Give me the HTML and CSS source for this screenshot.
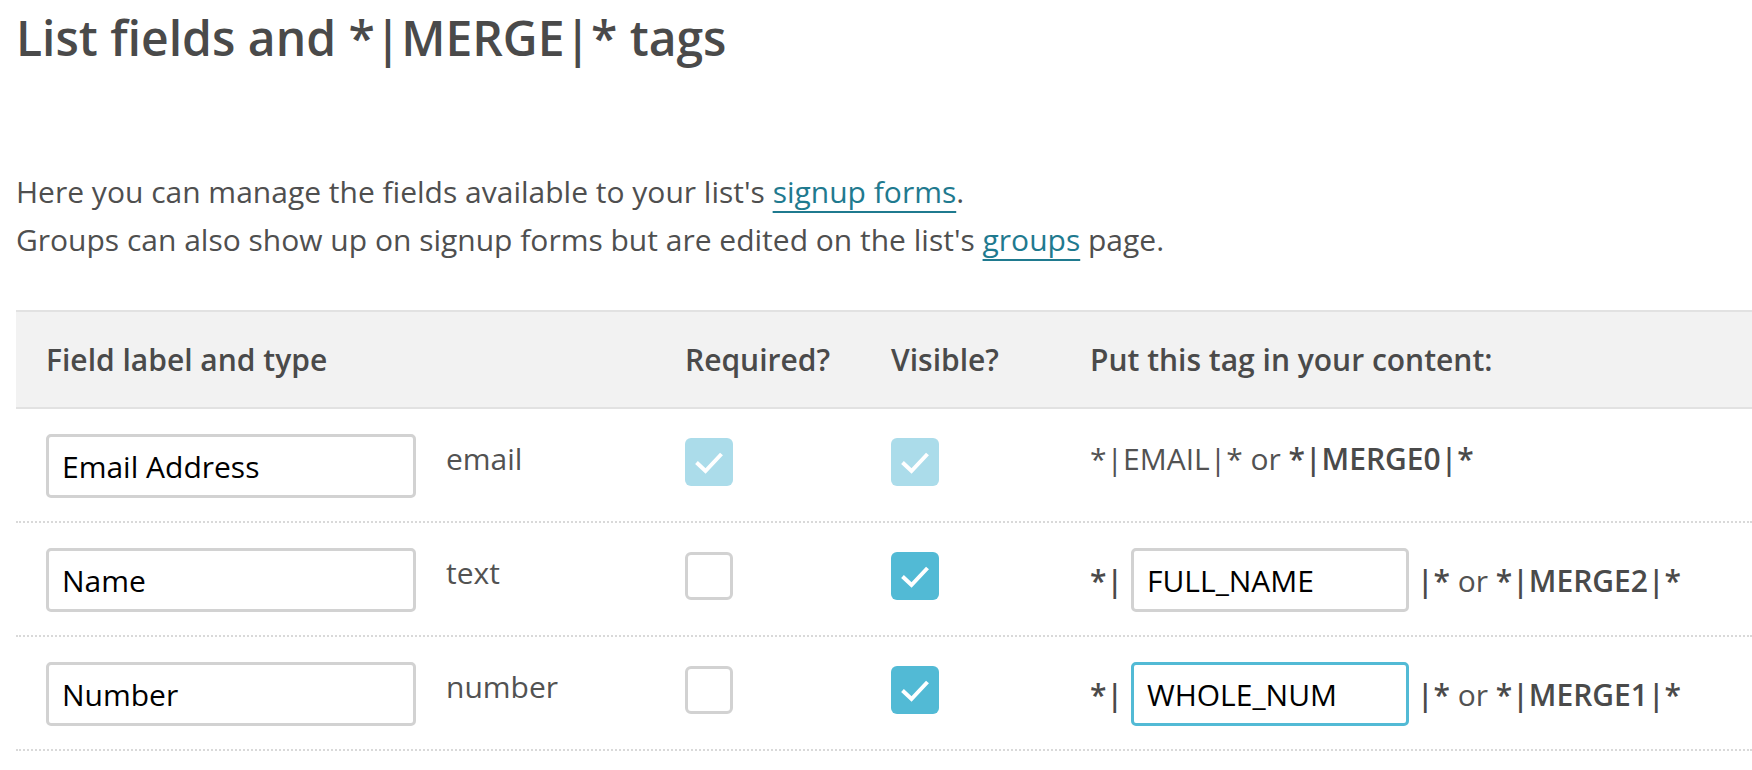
FILE: index.html
```html
<!DOCTYPE html>
<html lang="en">
<head>
<meta charset="utf-8">
<title>List fields and *|MERGE|* tags</title>
<link rel="stylesheet" href="styles.css">
</head>
<body>
<div class="page">
  <h1 class="title">List fields and *|MERGE|* tags</h1>
  <p class="intro">Here you can manage the fields available to your list's <a href="#" class="link">signup forms</a>.<br>Groups can also show up on signup forms but are edited on the list's <a href="#" class="link">groups</a> page.</p>

  <div class="table">
    <div class="row head">
      <div class="cell span2">Field label and type</div>
      <div class="cell">Required?</div>
      <div class="cell">Visible?</div>
      <div class="cell">Put this tag in your content:</div>
    </div>

    <div class="row">
      <div class="cell"><input class="field" type="text" value="Email Address"></div>
      <div class="cell text">email</div>
      <div class="cell"><span class="check disabled"><svg viewBox="0 0 48 48"><path d="M11.5 24.5 L20.5 33 L36.5 16"/></svg></span></div>
      <div class="cell"><span class="check disabled"><svg viewBox="0 0 48 48"><path d="M11.5 24.5 L20.5 33 L36.5 16"/></svg></span></div>
      <div class="cell text">*|EMAIL|* or <b>*|MERGE0|*</b></div>
    </div>

    <div class="row">
      <div class="cell"><input class="field" type="text" value="Name"></div>
      <div class="cell text">text</div>
      <div class="cell"><span class="check"></span></div>
      <div class="cell"><span class="check on"><svg viewBox="0 0 48 48"><path d="M11.5 24.5 L20.5 33 L36.5 16"/></svg></span></div>
      <div class="cell tag"><b>*|</b><input class="field tagfield" type="text" value="FULL_NAME"><span><b>|*</b> or <b>*|MERGE2|*</b></span></div>
    </div>

    <div class="row">
      <div class="cell"><input class="field" type="text" value="Number"></div>
      <div class="cell text">number</div>
      <div class="cell"><span class="check"></span></div>
      <div class="cell"><span class="check on"><svg viewBox="0 0 48 48"><path d="M11.5 24.5 L20.5 33 L36.5 16"/></svg></span></div>
      <div class="cell tag"><b>*|</b><input class="field tagfield focus" type="text" value="WHOLE_NUM"><span><b>|*</b> or <b>*|MERGE1|*</b></span></div>
    </div>
  </div>
</div>
</body>
</html>
```

FILE: styles.css
```css
html, body {
  margin: 0;
  padding: 0;
  background: #ffffff;
  overflow: hidden;
}

body {
  font-family: "Open Sans", "Liberation Sans", sans-serif;
  font-size: 30px;
  color: #4f4f4f;
}

.page {
  padding-left: 16px;
}

.title {
  margin: 9px 0 0 0;
  font-size: 48px;
  line-height: 58px;
  font-weight: 600;
  color: #4a4a4a;
}

.intro {
  margin: 101px 0 0 0;
  line-height: 47.5px;
  color: #4f4f4f;
}

.link {
  color: #1f7a8f;
  text-decoration: underline;
  text-decoration-thickness: 2px;
  text-underline-offset: 8px;
}

.table {
  margin-top: 47px;
}

.row {
  display: grid;
  grid-template-columns: 400px 239px 206px 199px 1fr;
  align-items: start;
  padding: 25px 0 23px 0;
  border-bottom: 2px dotted #d9d9d9;
}

.row.head {
  padding: 25px 0 25px 0;
  background: #f2f2f2;
  border-top: 2px solid #e2e2e2;
  border-bottom: 2px solid #e2e2e2;
  font-weight: 600;
  line-height: 45px;
  color: #4a4a4a;
}

.cell {
  padding-left: 30px;
}

.span2 {
  grid-column: span 2;
}

.text {
  line-height: 45px;
  margin-top: 2px;
  color: #525252;
}

.text b, .tag b {
  font-weight: 600;
  color: #4a4a4a;
}

.field {
  box-sizing: border-box;
  width: 370px;
  height: 64px;
  margin: 0;
  padding: 0 13px;
  border: 3px solid #d2d2d2;
  border-radius: 5px;
  font-family: "Open Sans", "Liberation Sans", sans-serif;
  font-size: 30px;
  color: #000000;
  background: #ffffff;
  outline: none;
}

.tagfield {
  width: 278px;
}

.tagfield.focus {
  border-color: #52bad5;
}

.tag {
  display: flex;
  align-items: center;
  gap: 8px;
  line-height: 45px;
  color: #525252;
}

.check {
  display: block;
  box-sizing: border-box;
  width: 48px;
  height: 48px;
  margin-top: 4px;
  border: 3px solid #d2d2d2;
  border-radius: 6px;
  background: #ffffff;
}

.check.on {
  border: none;
  background: #52bad5;
}

.check.disabled {
  border: none;
  background: #abdcea;
}

.check svg {
  display: block;
  width: 48px;
  height: 48px;
}

.check path {
  fill: none;
  stroke: #ffffff;
  stroke-width: 4;
}
```
